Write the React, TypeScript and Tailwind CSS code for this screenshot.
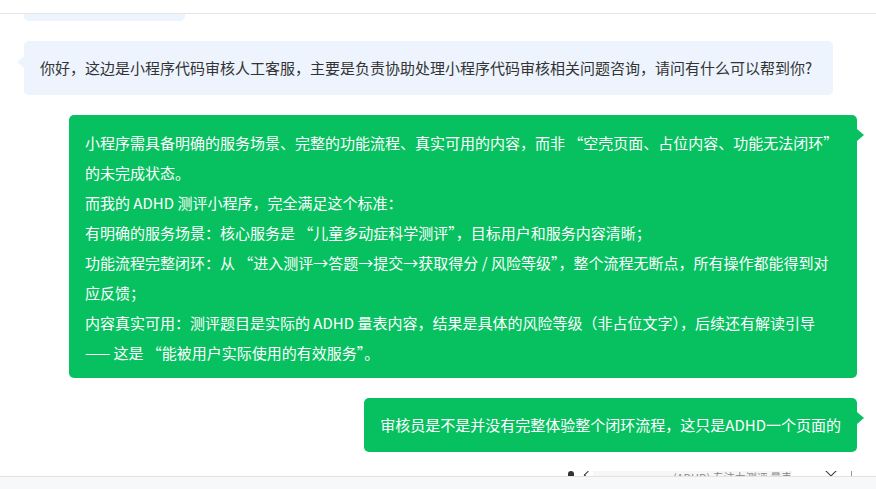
import React from "react";

const font = { fontFamily: '"Noto Sans CJK SC", "Noto Sans", sans-serif' };

export default function App() {
  return (
    <div className="w-[876px] h-[489px] bg-white overflow-hidden flex flex-col text-[15px]" style={font}>
      <div className="h-[14px] shrink-0 border-b border-[#e6e6e6] bg-white" />
      <div className="flex-1 flex flex-col overflow-hidden">
        <div className="pl-[24px]">
          <div className="w-[161px] h-[7px] bg-[#edf4fe] rounded-b-[5px]" />
        </div>

        <div className="pl-[24px] pt-[20px] flex">
          <div className="relative bg-[#edf4fe] text-[#333333] rounded-[5px] pl-4 pr-[21px] py-3 leading-[30px]">
            <span className="absolute left-[-7px] top-[15px] w-0 h-0 border-y-[6px] border-y-transparent border-r-[7px] border-r-[#edf4fe]" />
            你好，这边是小程序代码审核人工客服，主要是负责协助处理小程序代码审核相关问题咨询，请问有什么可以帮到你?
          </div>
        </div>

        <div className="pr-[19px] pt-[20px] flex justify-end">
          <div className="relative bg-[#07c160] text-white rounded-[5px] px-4 pt-[13px] pb-[10px] leading-[30px] max-w-[788px]">
            <span className="absolute right-[-7px] top-[14px] w-0 h-0 border-y-[6px] border-y-transparent border-l-[7px] border-l-[#07c160]" />
            <div>小程序需具备明确的服务场景、完整的功能流程、真实可用的内容，而非 “空壳页面、占位内容、功能无法闭环” 的未完成状态。</div>
            <div>而我的 ADHD 测评小程序，完全满足这个标准：</div>
            <div>有明确的服务场景：核心服务是 “儿童多动症科学测评”，目标用户和服务内容清晰；</div>
            <div>功能流程完整闭环：从 “进入测评→答题→提交→获取得分 / 风险等级”，整个流程无断点，所有操作都能得到对应反馈；</div>
            <div>内容真实可用：测评题目是实际的 ADHD 量表内容，结果是具体的风险等级（非占位文字），后续还有解读引导</div>
            <div>—— 这是 “能被用户实际使用的有效服务”。</div>
          </div>
        </div>

        <div className="pr-[19px] pt-[20px] flex justify-end">
          <div className="relative bg-[#07c160] text-white rounded-[5px] pl-4 pr-4 py-3 leading-[30px]">
            <span className="absolute right-[-7px] top-[14px] w-0 h-0 border-y-[6px] border-y-transparent border-l-[7px] border-l-[#07c160]" />
            审核员是不是并没有完整体验整个闭环流程，这只是ADHD一个页面的
          </div>
        </div>

        <div className="mt-auto h-[5px] overflow-hidden flex items-start text-[11px] leading-[10px] text-[#888]">
          <div className="ml-[568px] w-[6px] h-[8px] rounded-t-[3px] bg-[#333]" />
          <div className="ml-[11px] w-[6px] h-[6px] border-l-[1.5px] border-t-[1.5px] border-[#333] rotate-[-45deg] mt-[1px]" />
          <div className="ml-[2px] w-[198px] h-[5px] bg-[#f6f6f6] border-r border-[#dddddd] pl-[80px] pt-[1px] whitespace-nowrap overflow-hidden">
            (ADHD) 专注力测评 量表
          </div>
          <div className="ml-[36px] w-[8px] h-[8px] border-r-[1.5px] border-b-[1.5px] border-[#333] rotate-45 mt-[-4px]" />
          <div className="ml-[16px] w-[1px] h-[5px] bg-[#999]" />
        </div>
      </div>
      <div className="h-[13px] shrink-0 border-t border-[#e3e3e3] bg-[#f7f8fa]" />
    </div>
  );
}
